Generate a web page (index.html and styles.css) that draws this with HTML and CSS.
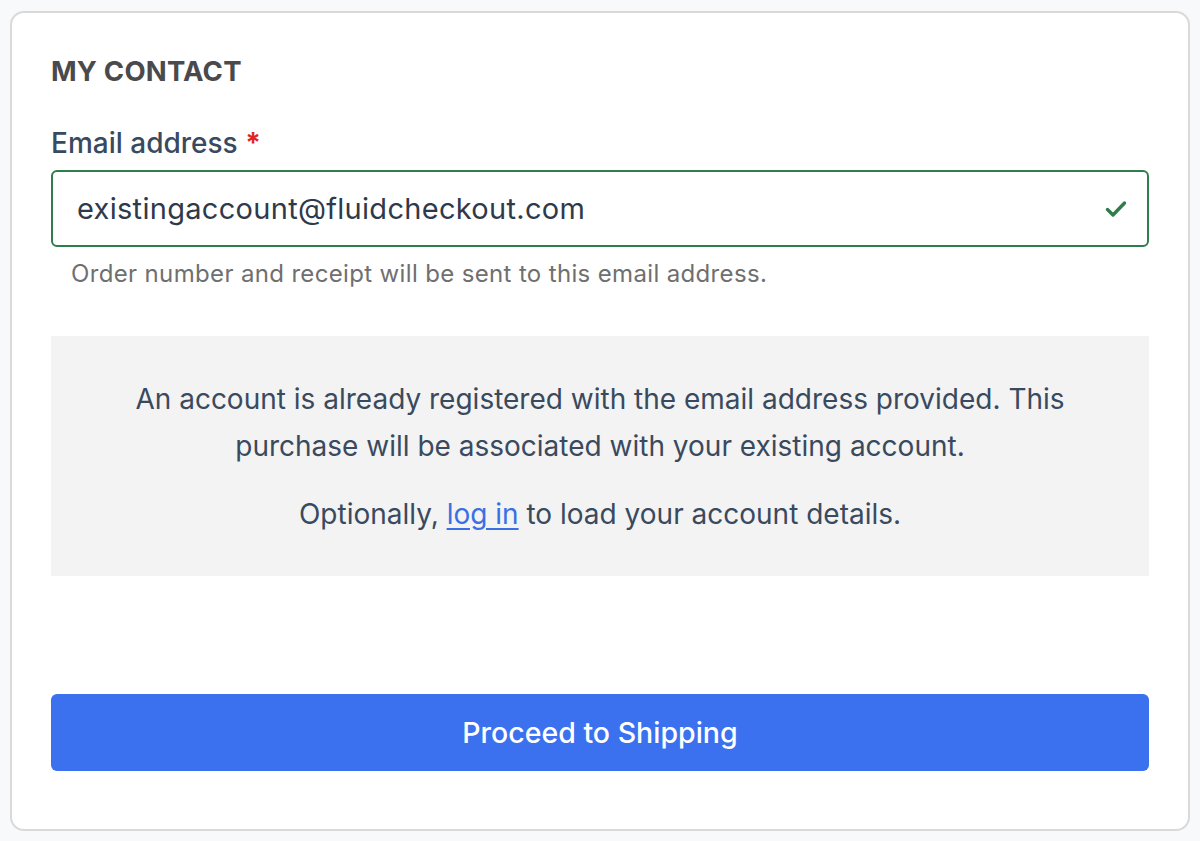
FILE: index.html
```html
<!DOCTYPE html>
<html lang="en">
<head>
<meta charset="utf-8">
<link rel="stylesheet" href="styles.css">
</head>
<body>
<div class="card">
  <h2 class="title">MY CONTACT</h2>
  <div class="field">
    <label class="label">Email address <span class="req">*</span></label>
    <div class="input">
      <span class="value">existingaccount@fluidcheckout.com</span>
      <svg class="check" width="22" height="18" viewBox="0 0 22 18"><path d="M2.5 9.5 L8 15 L19.5 3" fill="none" stroke="#2f7d4b" stroke-width="3.4" stroke-linecap="round" stroke-linejoin="round"/></svg>
    </div>
    <p class="help">Order number and receipt will be sent to this email address.</p>
  </div>
  <div class="notice">
    <p class="notice-text">An account is already registered with the email address provided. This purchase will be associated with your existing account.</p>
    <p class="notice-text second">Optionally, <a class="link" href="#">log in</a> to load your account details.</p>
  </div>
  <button class="btn">Proceed to Shipping</button>
</div>
</body>
</html>
```
FILE: styles.css
```css
html, body {
  margin: 0;
  padding: 0;
  background: #f8f9fb;
}
body {
  font-family: Inter, "Noto Sans", sans-serif;
  padding: 11px 10px 10px 10px;
}
.card {
  box-sizing: border-box;
  width: 1180px;
  height: 820px;
  background: #fff;
  border: 2px solid #d9d9d9;
  border-radius: 14px;
  padding: 0 39px;
  display: flex;
  flex-direction: column;
}
.title {
  margin: 43px 0 0 0;
  font-size: 27.5px;
  line-height: 30px;
  font-weight: 700;
  color: #4a4a4c;
  letter-spacing: 0.2px;
}
.field {
  margin-top: 41px;
}
.label {
  display: block;
  font-size: 28px;
  line-height: 32px;
  color: #3a4a5e;
  font-weight: 500;
}
.req {
  color: #e0261f;
  font-weight: 700;
}
.input {
  box-sizing: border-box;
  margin-top: 11px;
  height: 77px;
  border: 2px solid #2f7d4b;
  border-radius: 6px;
  display: flex;
  align-items: center;
  justify-content: space-between;
  padding: 0 20px 0 24px;
}
.value {
  font-size: 29px;
  letter-spacing: 0.3px;
  color: #2e3a4b;
}
.check {
  display: block;
}
.help {
  margin: 13px 0 0 20px;
  font-size: 24px;
  line-height: 28px;
  letter-spacing: 0.35px;
  color: #6f6f6f;
}
.notice {
  margin-top: 48px;
  height: 240px;
  box-sizing: border-box;
  background: #f3f3f3;
  padding: 40px 60px 0 60px;
  text-align: center;
}
.notice-text {
  margin: 0;
  font-size: 28px;
  line-height: 47px;
  color: #3a4a5e;
}
.notice-text.second {
  margin-top: 21px;
}
.link {
  color: #3b6fe3;
  text-decoration: underline;
  text-underline-offset: 4px;
}
.btn {
  margin-top: 118px;
  height: 77px;
  border: none;
  border-radius: 6px;
  background: #3b70ef;
  color: #fff;
  font-family: Inter, "Noto Sans", sans-serif;
  font-size: 28.5px;
  font-weight: 500;
  cursor: pointer;
}
```
